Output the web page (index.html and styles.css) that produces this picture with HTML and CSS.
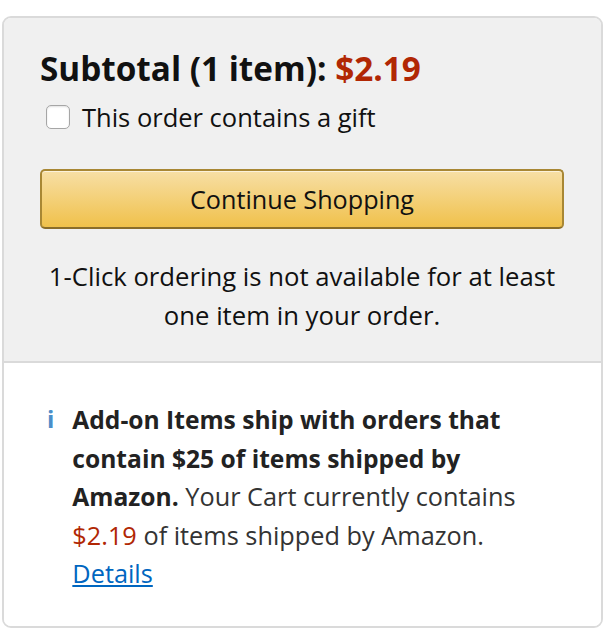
FILE: index.html
```html
<!DOCTYPE html>
<html lang="en">
<head>
<meta charset="utf-8">
<title>Cart subtotal</title>
<link rel="stylesheet" href="styles.css">
</head>
<body>
<div class="box">
  <div class="summary">
    <div class="subtotal">Subtotal (1 item): <span class="price">$2.19</span></div>
    <label class="gift"><span class="check"></span><span>This order contains a gift</span></label>
    <button class="btn" type="button">Continue Shopping</button>
    <p class="note">1-Click ordering is not available for at least one item in your order.</p>
  </div>
  <div class="addon">
    <span class="info">i</span>
    <p class="addon-text"><b>Add-on Items ship with orders that contain $25 of items shipped by Amazon.</b> Your Cart currently contains <span class="price-sm">$2.19</span> of items shipped by Amazon. <a href="#" class="link">Details</a></p>
  </div>
</div>
</body>
</html>
```
FILE: styles.css
```css
* { box-sizing: border-box; }
body {
  margin: 0;
  padding: 16px 0 0 2px;
  background: #fff;
  font-family: "Open Sans", "Noto Sans", sans-serif;
  color: #111;
}
.box {
  width: 601px;
  height: 612px;
  border: 2px solid #dadada;
  border-radius: 9px;
  overflow: hidden;
  display: flex;
  flex-direction: column;
}
.summary {
  background: #f0f0f0;
  border-bottom: 2px solid #dadada;
  padding: 32px 37px 26px 36px;
  display: flex;
  flex-direction: column;
}
.subtotal {
  font-size: 33.3px;
  font-weight: 700;
  line-height: 36px;
  color: #111;
}
.price { color: #b12704; }
.gift {
  display: flex;
  align-items: center;
  gap: 12px;
  margin-top: 13px;
  height: 36px;
  padding-left: 6px;
  font-size: 25.5px;
}
.check {
  width: 24px;
  height: 24px;
  border: 1.5px solid #a6a6a6;
  border-radius: 5px;
  background: #fff;
  box-shadow: inset 0 1px 2px rgba(0,0,0,0.12);
  flex: none;
}
.btn {
  margin-top: 34px;
  height: 60px;
  width: 100%;
  border: 2px solid #a88734;
  border-bottom-color: #8a6d2a;
  border-radius: 5px;
  background: linear-gradient(#f7dfa5, #f0c14b);
  box-shadow: inset 0 1px 0 rgba(255,255,255,0.6);
  font-family: inherit;
  font-size: 25.2px;
  color: #111;
  padding: 0;
}
.note {
  margin: 28px 0 0;
  text-align: center;
  font-size: 25.7px;
  line-height: 39px;
}
.addon {
  flex: 1;
  background: #fff;
  display: flex;
  padding: 37px 66px 0 43px;
  gap: 18px;
}
.info {
  color: #4a8ec9;
  font-weight: 700;
  font-size: 24px;
  line-height: 38.5px;
}
.addon-text {
  margin: 0;
  font-size: 25.3px;
  line-height: 38.5px;
  color: #333;
}
.addon-text b { color: #222; font-size: 24.6px; line-height: 1; }
.price-sm { color: #b12704; }
.link {
  color: #0066c0;
  text-decoration: underline;
}
```
